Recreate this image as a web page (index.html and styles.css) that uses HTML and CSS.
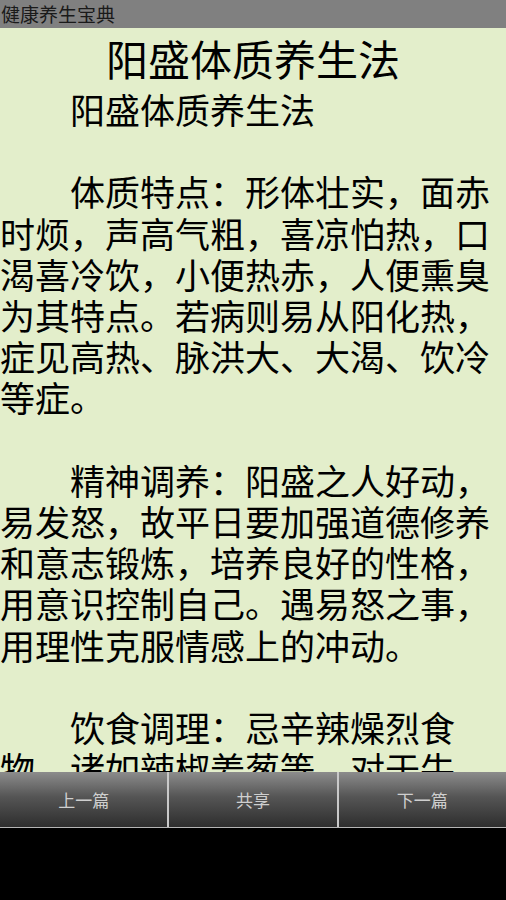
FILE: index.html
```html
<!DOCTYPE html>
<html lang="zh-CN">
<head>
<meta charset="utf-8">
<title>健康养生宝典</title>
<link rel="stylesheet" href="styles.css">
</head>
<body>
<div class="app">
  <header class="titlebar">健康养生宝典</header>
  <main class="content">
    <h1 class="title">阳盛体质养生法</h1>
    <div class="article">
      <p class="para">阳盛体质养生法</p>
      <p class="blank">&nbsp;</p>
      <p class="para">体质特点：形体壮实，面赤时烦，声高气粗，喜凉怕热，口渴喜冷饮，小便热赤，人便熏臭为其特点。若病则易从阳化热，症见高热、脉洪大、大渴、饮冷等症。</p>
      <p class="blank">&nbsp;</p>
      <p class="para">精神调养：阳盛之人好动，易发怒，故平日要加强道德修养和意志锻炼，培养良好的性格，用意识控制自己。遇易怒之事，用理性克服情感上的冲动。</p>
      <p class="blank">&nbsp;</p>
      <p class="para">饮食调理：忌辛辣燥烈食物，诸如辣椒姜葱等，对于牛、羊、狗肉等温阳食物宜少食用。</p>
    </div>
  </main>
  <nav class="toolbar">
    <div class="btn">上一篇</div>
    <div class="btn">共享</div>
    <div class="btn">下一篇</div>
  </nav>
  <div class="bottom"></div>
</div>
</body>
</html>
```
FILE: styles.css
```css
html, body {
  margin: 0;
  padding: 0;
  background: #000;
}
body {
  font-family: "Noto Sans CJK SC", "Noto Sans", sans-serif;
}
.app {
  width: 506px;
  height: 900px;
  display: flex;
  flex-direction: column;
  overflow: hidden;
}
.titlebar {
  height: 28px;
  flex: none;
  background: #808080;
  color: #1a1a1a;
  font-size: 19px;
  line-height: 28px;
  padding-left: 1px;
  white-space: nowrap;
}
.content {
  height: 744px;
  flex: none;
  background: #e3eecb;
  color: #000;
  overflow: hidden;
}
.title {
  margin: 0;
  font-size: 42px;
  font-weight: normal;
  line-height: 60px;
  text-align: center;
}
.article {
  font-size: 35px;
  line-height: 41.2px;
}
.para {
  margin: 0;
  text-indent: 2em;
  line-break: strict;
}
.blank {
  margin: 0;
}
.toolbar {
  height: 55px;
  flex: none;
  display: flex;
  border-bottom: 1px solid #b5b5b5;
}
.btn {
  flex: 1;
  display: flex;
  align-items: center;
  justify-content: center;
  border-left: 2px solid #c9c9c9;
  background: linear-gradient(#8c8c8c 0%, #555 45%, #2e2e2e 100%);
  color: #cfcfcf;
  font-size: 17px;
}
.btn:first-child {
  border-left: none;
}
.bottom {
  flex: 1;
  background: #000;
}
```
